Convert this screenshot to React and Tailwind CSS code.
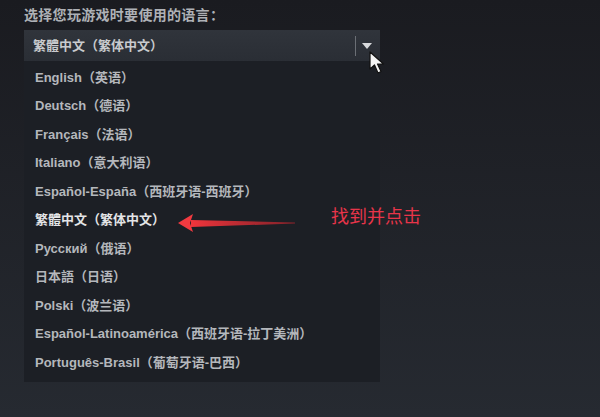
import React from 'react';

const languages = [
  'English（英语）',
  'Deutsch（德语）',
  'Français（法语）',
  'Italiano（意大利语）',
  'Español-España（西班牙语-西班牙）',
  '繁體中文（繁体中文）',
  'Русский（俄语）',
  '日本語（日语）',
  'Polski（波兰语）',
  'Español-Latinoamérica（西班牙语-拉丁美洲）',
  'Português-Brasil（葡萄牙语-巴西）',
];

const font = { fontFamily: '"Liberation Sans", "Noto Sans CJK SC", sans-serif' };

function Cursor() {
  return (
    <svg className="absolute left-[369px] top-[51px]" width="18" height="24" viewBox="0 0 18 24">
      <path d="M1 1 L1 18 L5.5 14 L9 22 L12 20.5 L8.5 13 L14.5 13 Z" fill="#f4f4f4" stroke="#111" strokeWidth="1.2" strokeLinejoin="round" />
    </svg>
  );
}

function RedArrow() {
  return (
    <svg className="absolute left-[175px] top-[210px]" width="125" height="26" viewBox="0 0 125 26">
      <defs>
        <linearGradient id="shaft" x1="0" y1="0" x2="1" y2="0">
          <stop offset="0" stopColor="#f0353c" />
          <stop offset="1" stopColor="#c8252e" stopOpacity="0.6" />
        </linearGradient>
      </defs>
      <path d="M16 10 L120 12.5 L120 13.5 L16 17 Z" fill="url(#shaft)" />
      <path d="M3 13 L18 4 L15 13 L18 22 Z" fill="#f23a40" />
    </svg>
  );
}

export default function App() {
  return (
    <div
      className="relative w-[600px] h-[417px] overflow-hidden bg-gradient-to-b from-[#1a1b20] to-[#262a31] pl-[24px] pt-[6px]"
      style={font}
    >
      <div className="text-[14px] leading-[18px] text-[#aeb1b6] font-bold tracking-[0.3px]">
        选择您玩游戏时要使用的语言：
      </div>

      <div className="mt-[6px] w-[356px]">
        <div className="flex h-[31px] items-center bg-gradient-to-b from-[#30343b] to-[#2a2e35] pl-[9px] pr-[8px]">
          <span className="flex-1 text-[13px] font-bold text-[#c9cbce]">繁體中文（繁体中文）</span>
          <div className="h-[20px] w-px bg-[#6b6f75]" />
          <svg className="ml-[6px]" width="10" height="6" viewBox="0 0 10 6">
            <path d="M0 0 L10 0 L5 6 Z" fill="#d7d9dc" />
          </svg>
        </div>

        <div className="flex flex-col bg-[#1c1f25] pt-[2px] pb-[5px] pl-[11px]">
          {languages.map((lang, i) => (
            <div
              key={lang}
              className={`h-[28.5px] flex items-center text-[13px] font-bold ${
                i === 5 ? 'text-[#e4e5e7]' : 'text-[#b4b7bc]'
              }`}
            >
              {lang}
            </div>
          ))}
        </div>
      </div>

      <div className="absolute left-[331px] top-[205px] text-[18px] leading-[24px] text-[#e8354a]">
        找到并点击
      </div>
      <RedArrow />
      <Cursor />
    </div>
  );
}
